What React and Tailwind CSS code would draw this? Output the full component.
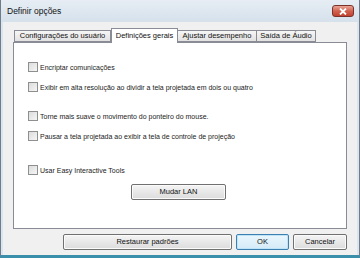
import React from 'react'

const TABS = [
  { label: 'Configurações do usuário', w: 'w-[97px]' },
  { label: 'Definições gerais', w: 'w-[67px]', active: true },
  { label: 'Ajustar desempenho', w: 'w-[80px]' },
  { label: 'Saída de Áudio', w: 'w-[60px]' },
]

function Check({ label, className = '' }) {
  return (
    <div className={`flex items-center h-[10px] ${className}`}>
      <span className="w-[10px] h-[10px] border border-[#8e8f8f] bg-gradient-to-br from-[#dcdcdc] to-[#f6f6f6] shrink-0" />
      <span className="ml-[2px] text-[7px] leading-none text-[#222]">{label}</span>
    </div>
  )
}

function Button({ children, className = '', primary }) {
  return (
    <div
      className={`h-[16px] flex items-center justify-center rounded-[2px] border text-[7.5px] text-[#111] ${
        primary
          ? 'border-[#3c7fb1] bg-gradient-to-b from-[#eaf6fd] to-[#d5ebf8] shadow-[inset_0_0_0_1px_#bfe4f7]'
          : 'border-[#707070] bg-gradient-to-b from-[#f4f4f4] to-[#dcdcdc] shadow-[inset_0_0_0_1px_#fbfbfb]'
      } ${className}`}
    >
      {children}
    </div>
  )
}

export default function App() {
  return (
    <div className="w-[360px] h-[258px] flex flex-col overflow-hidden border-x border-[#6f7c89] border-b-[3px] border-b-[#3a90ab] bg-[#dbe5ef] font-['Liberation_Sans',Arial,sans-serif]">
      {/* Title bar */}
      <div className="h-[22px] flex items-center justify-between pl-[6px] pr-[5px] bg-gradient-to-b from-[#e6edf4] to-[#d6e1ec] shrink-0">
        <span className="text-[8.5px] text-[#111]">Definir opções</span>
        <div className="w-[22px] h-[12px] rounded-[3px] border border-[#7a322b] bg-gradient-to-b from-[#e8a597] via-[#d1614f] to-[#c2412f] flex items-center justify-center">
          <svg width="8" height="7" viewBox="0 0 8 7">
            <path d="M1 0.5 L7 6.5 M7 0.5 L1 6.5" stroke="white" strokeWidth="1.8" />
          </svg>
        </div>
      </div>

      {/* Body */}
      <div className="flex-1 flex flex-col bg-[#f0f0f0] px-[10px] pt-[6px] border-x-[2px] border-[#dbe5ef]">
        {/* Tabs */}
        <div className="flex items-end h-[14px] pl-[1px] relative z-10">
          {TABS.map((t) =>
            t.active ? (
              <div
                key={t.label}
                className={`${t.w} h-[15px] -mb-px bg-white border border-b-0 border-[#898c95] flex items-center justify-center text-[7.5px] text-[#111] whitespace-nowrap`}
              >
                {t.label}
              </div>
            ) : (
              <div
                key={t.label}
                className={`${t.w} h-[12px] bg-gradient-to-b from-[#f6f6f6] to-[#e2e2e2] border border-[#898c95] -ml-px first:ml-0 flex items-center justify-center text-[7.5px] text-[#111] whitespace-nowrap`}
              >
                {t.label}
              </div>
            )
          )}
        </div>

        {/* Panel */}
        <div className="h-[187px] bg-white border border-[#898c95] flex flex-col pl-[14px] pt-[19px]">
          <Check label="Encriptar comunicações" />
          <Check className="mt-[10px]" label="Exibir em alta resolução ao dividir a tela projetada em dois ou quatro" />
          <Check className="mt-[19px]" label="Torne mais suave o movimento do ponteiro do mouse." />
          <Check className="mt-[10px]" label="Pausar a tela projetada ao exibir a tela de controle de projeção" />
          <Check className="mt-[24px]" label="Usar Easy Interactive Tools" />
          <Button className="mt-[9px] ml-[103px] w-[95px]">Mudar LAN</Button>
        </div>

        {/* Footer buttons */}
        <div className="flex justify-end gap-[4px] mt-[5px]">
          <Button className="w-[169px]">Restaurar padrões</Button>
          <Button primary className="w-[53px]">OK</Button>
          <Button className="w-[54px]">Cancelar</Button>
        </div>
      </div>
    </div>
  )
}
